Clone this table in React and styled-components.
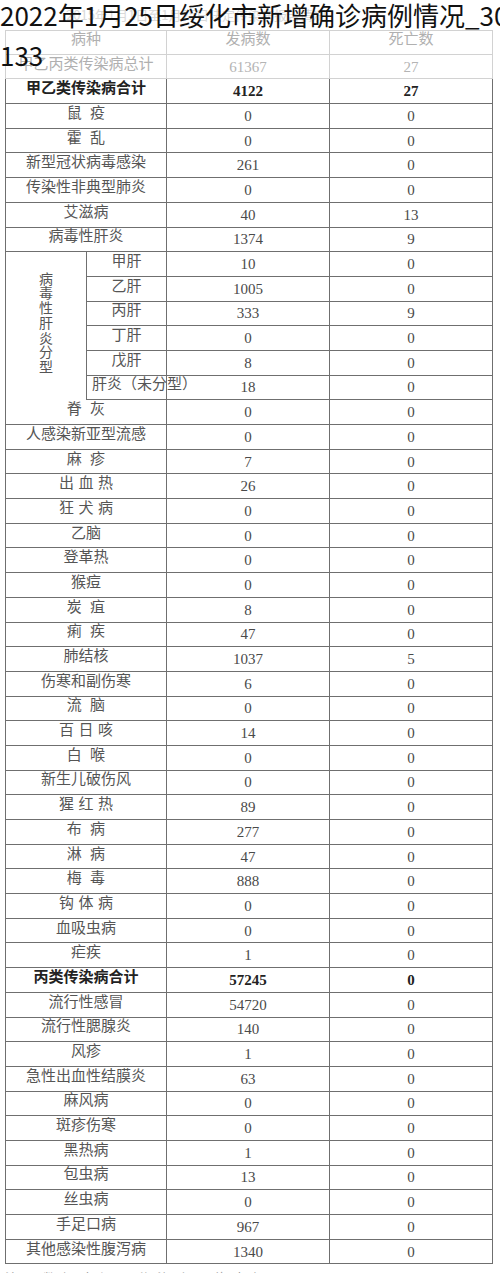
import React from 'react';
import styled, { createGlobalStyle, css } from 'styled-components';

const line = '#6f6f6f';
const faintLine = '#d2d2d2';
const cjk = '"Noto Sans CJK SC", "Noto Sans", sans-serif';
const serif = '"Liberation Serif", "Noto Sans CJK SC", serif';

const GlobalStyle = createGlobalStyle`
  html, body {
    margin: 0;
    background: #fff;
    overflow: hidden;
  }
`;

const Page = styled.div`
  position: relative;
  width: 500px;
  padding: 30px 0 0 5px;
  box-sizing: border-box;
`;

const Title = styled.h1`
  position: absolute;
  top: -5px;
  left: 0;
  z-index: 2;
  width: 512px;
  margin: 0;
  font-family: ${cjk};
  font-size: 26px;
  font-weight: 400;
  line-height: 40px;
  color: #111;
  word-break: break-all;
`;

const Caption = styled.div`
  position: absolute;
  top: 7px;
  left: 66px;
  font-family: ${cjk};
  font-size: 13px;
  line-height: 16px;
  color: #dadada;
  white-space: nowrap;
`;

const Table = styled.div`
  display: grid;
  grid-template-columns: 82px 80px 163px 163px;
  grid-auto-rows: 24.7px;
  width: 488px;
`;

const cellBase = css`
  box-sizing: border-box;
  display: flex;
  align-items: center;
  justify-content: center;
  border-right: 1px solid ${(p) => (p.$faded ? faintLine : line)};
  border-bottom: 1px solid ${(p) => (p.$faded ? faintLine : line)};
  border-top: ${(p) => (p.$top ? `1px solid ${faintLine}` : 'none')};
  white-space: nowrap;
`;

const NameCell = styled.div`
  ${cellBase}
  grid-column: span 2;
  border-left: 1px solid ${(p) => (p.$faded ? faintLine : line)};
  padding-bottom: 9px;
  font-family: ${cjk};
  font-size: 15px;
  line-height: 1;
  font-weight: ${(p) => (p.$bold ? 700 : 400)};
  color: ${(p) => (p.$faded ? '#b0b0b0' : p.$bold ? '#222' : '#555')};
  letter-spacing: ${(p) => p.$spacing || 0};
  text-indent: ${(p) => p.$spacing || 0};
`;

const NumCell = styled.div`
  ${cellBase}
  font-family: ${serif};
  font-size: 15px;
  line-height: 1;
  font-weight: ${(p) => (p.$bold ? 700 : 400)};
  color: ${(p) => (p.$faded ? '#b4b4b4' : p.$bold ? '#222' : '#4a4a4a')};
  padding-top: 1px;
`;

const HeadNum = styled(NumCell)`
  font-family: ${cjk};
  padding: 0 0 9px;
  color: #b0b0b0;
`;

const GroupLabel = styled.div`
  box-sizing: border-box;
  grid-row: span 6;
  display: flex;
  align-items: center;
  justify-content: center;
  padding-bottom: 8px;
  border-left: 1px solid ${line};
  border-right: 1px solid ${line};
  font-family: ${cjk};
  font-size: 14px;
  line-height: 14.7px;
  color: #555;
`;

const VerticalText = styled.span`
  width: 1em;
  text-align: center;
  word-break: break-all;
  white-space: normal;
`;

const SubName = styled.div`
  ${cellBase}
  position: relative;
  z-index: 1;
  justify-content: ${(p) => (p.$wide ? 'flex-start' : 'center')};
  padding: 0 0 9px ${(p) => (p.$wide ? '5px' : '0')};
  overflow: visible;
  font-family: ${cjk};
  font-size: 15px;
  line-height: 1;
  color: #555;
`;

const Footnote = styled.div`
  margin-top: 4px;
  font-family: ${cjk};
  font-size: 13px;
  color: #9a9a9a;
  letter-spacing: 6px;
`;

const two = '0.55em';
const three = '0.3em';

const before = [
  { name: '甲乙丙类传染病总计', cases: '61367', deaths: '27', faded: true },
  { name: '甲乙类传染病合计', cases: '4122', deaths: '27', bold: true },
  { name: '鼠疫', cases: '0', deaths: '0', spacing: two },
  { name: '霍乱', cases: '0', deaths: '0', spacing: two },
  { name: '新型冠状病毒感染', cases: '261', deaths: '0' },
  { name: '传染性非典型肺炎', cases: '0', deaths: '0' },
  { name: '艾滋病', cases: '40', deaths: '13' },
  { name: '病毒性肝炎', cases: '1374', deaths: '9' },
];

const hepatitis = [
  { name: '甲肝', cases: '10', deaths: '0' },
  { name: '乙肝', cases: '1005', deaths: '0' },
  { name: '丙肝', cases: '333', deaths: '9' },
  { name: '丁肝', cases: '0', deaths: '0' },
  { name: '戊肝', cases: '8', deaths: '0' },
  { name: '肝炎（未分型）', cases: '18', deaths: '0', wide: true },
];

const after = [
  { name: '脊灰', cases: '0', deaths: '0', spacing: two },
  { name: '人感染新亚型流感', cases: '0', deaths: '0' },
  { name: '麻疹', cases: '7', deaths: '0', spacing: two },
  { name: '出血热', cases: '26', deaths: '0', spacing: three },
  { name: '狂犬病', cases: '0', deaths: '0', spacing: three },
  { name: '乙脑', cases: '0', deaths: '0' },
  { name: '登革热', cases: '0', deaths: '0' },
  { name: '猴痘', cases: '0', deaths: '0' },
  { name: '炭疽', cases: '8', deaths: '0', spacing: two },
  { name: '痢疾', cases: '47', deaths: '0', spacing: two },
  { name: '肺结核', cases: '1037', deaths: '5' },
  { name: '伤寒和副伤寒', cases: '6', deaths: '0' },
  { name: '流脑', cases: '0', deaths: '0', spacing: two },
  { name: '百日咳', cases: '14', deaths: '0', spacing: three },
  { name: '白喉', cases: '0', deaths: '0', spacing: two },
  { name: '新生儿破伤风', cases: '0', deaths: '0' },
  { name: '猩红热', cases: '89', deaths: '0', spacing: three },
  { name: '布病', cases: '277', deaths: '0', spacing: two },
  { name: '淋病', cases: '47', deaths: '0', spacing: two },
  { name: '梅毒', cases: '888', deaths: '0', spacing: two },
  { name: '钩体病', cases: '0', deaths: '0', spacing: three },
  { name: '血吸虫病', cases: '0', deaths: '0' },
  { name: '疟疾', cases: '1', deaths: '0' },
  { name: '丙类传染病合计', cases: '57245', deaths: '0', bold: true },
  { name: '流行性感冒', cases: '54720', deaths: '0' },
  { name: '流行性腮腺炎', cases: '140', deaths: '0' },
  { name: '风疹', cases: '1', deaths: '0' },
  { name: '急性出血性结膜炎', cases: '63', deaths: '0' },
  { name: '麻风病', cases: '0', deaths: '0' },
  { name: '斑疹伤寒', cases: '0', deaths: '0' },
  { name: '黑热病', cases: '1', deaths: '0' },
  { name: '包虫病', cases: '13', deaths: '0' },
  { name: '丝虫病', cases: '0', deaths: '0' },
  { name: '手足口病', cases: '967', deaths: '0' },
  { name: '其他感染性腹泻病', cases: '1340', deaths: '0' },
];

const Row = ({ name, cases, deaths, bold, faded, spacing }) => (
  <>
    <NameCell $bold={bold} $faded={faded} $spacing={spacing}>{name}</NameCell>
    <NumCell $bold={bold} $faded={faded}>{cases}</NumCell>
    <NumCell $bold={bold} $faded={faded}>{deaths}</NumCell>
  </>
);

const App = () => (
  <Page>
    <GlobalStyle />
    <Title>2022年1月25日绥化市新增确诊病例情况_30133</Title>
    <Caption>2015年1月1日至1月25日法定传染病报告情况</Caption>
    <Table>
      <NameCell $faded $top>病种</NameCell>
      <HeadNum $faded $top>发病数</HeadNum>
      <HeadNum $faded $top>死亡数</HeadNum>
      {before.map((r) => <Row key={r.name} {...r} />)}
      <GroupLabel>
        <VerticalText>病毒性肝炎分型</VerticalText>
      </GroupLabel>
      {hepatitis.map((r) => (
        <React.Fragment key={r.name}>
          <SubName $wide={r.wide}>{r.name}</SubName>
          <NumCell>{r.cases}</NumCell>
          <NumCell>{r.deaths}</NumCell>
        </React.Fragment>
      ))}
      {after.map((r) => <Row key={r.name} {...r} />)}
    </Table>
    <Footnote>注：数据来源于传染病网络直报</Footnote>
  </Page>
);

export default App;
